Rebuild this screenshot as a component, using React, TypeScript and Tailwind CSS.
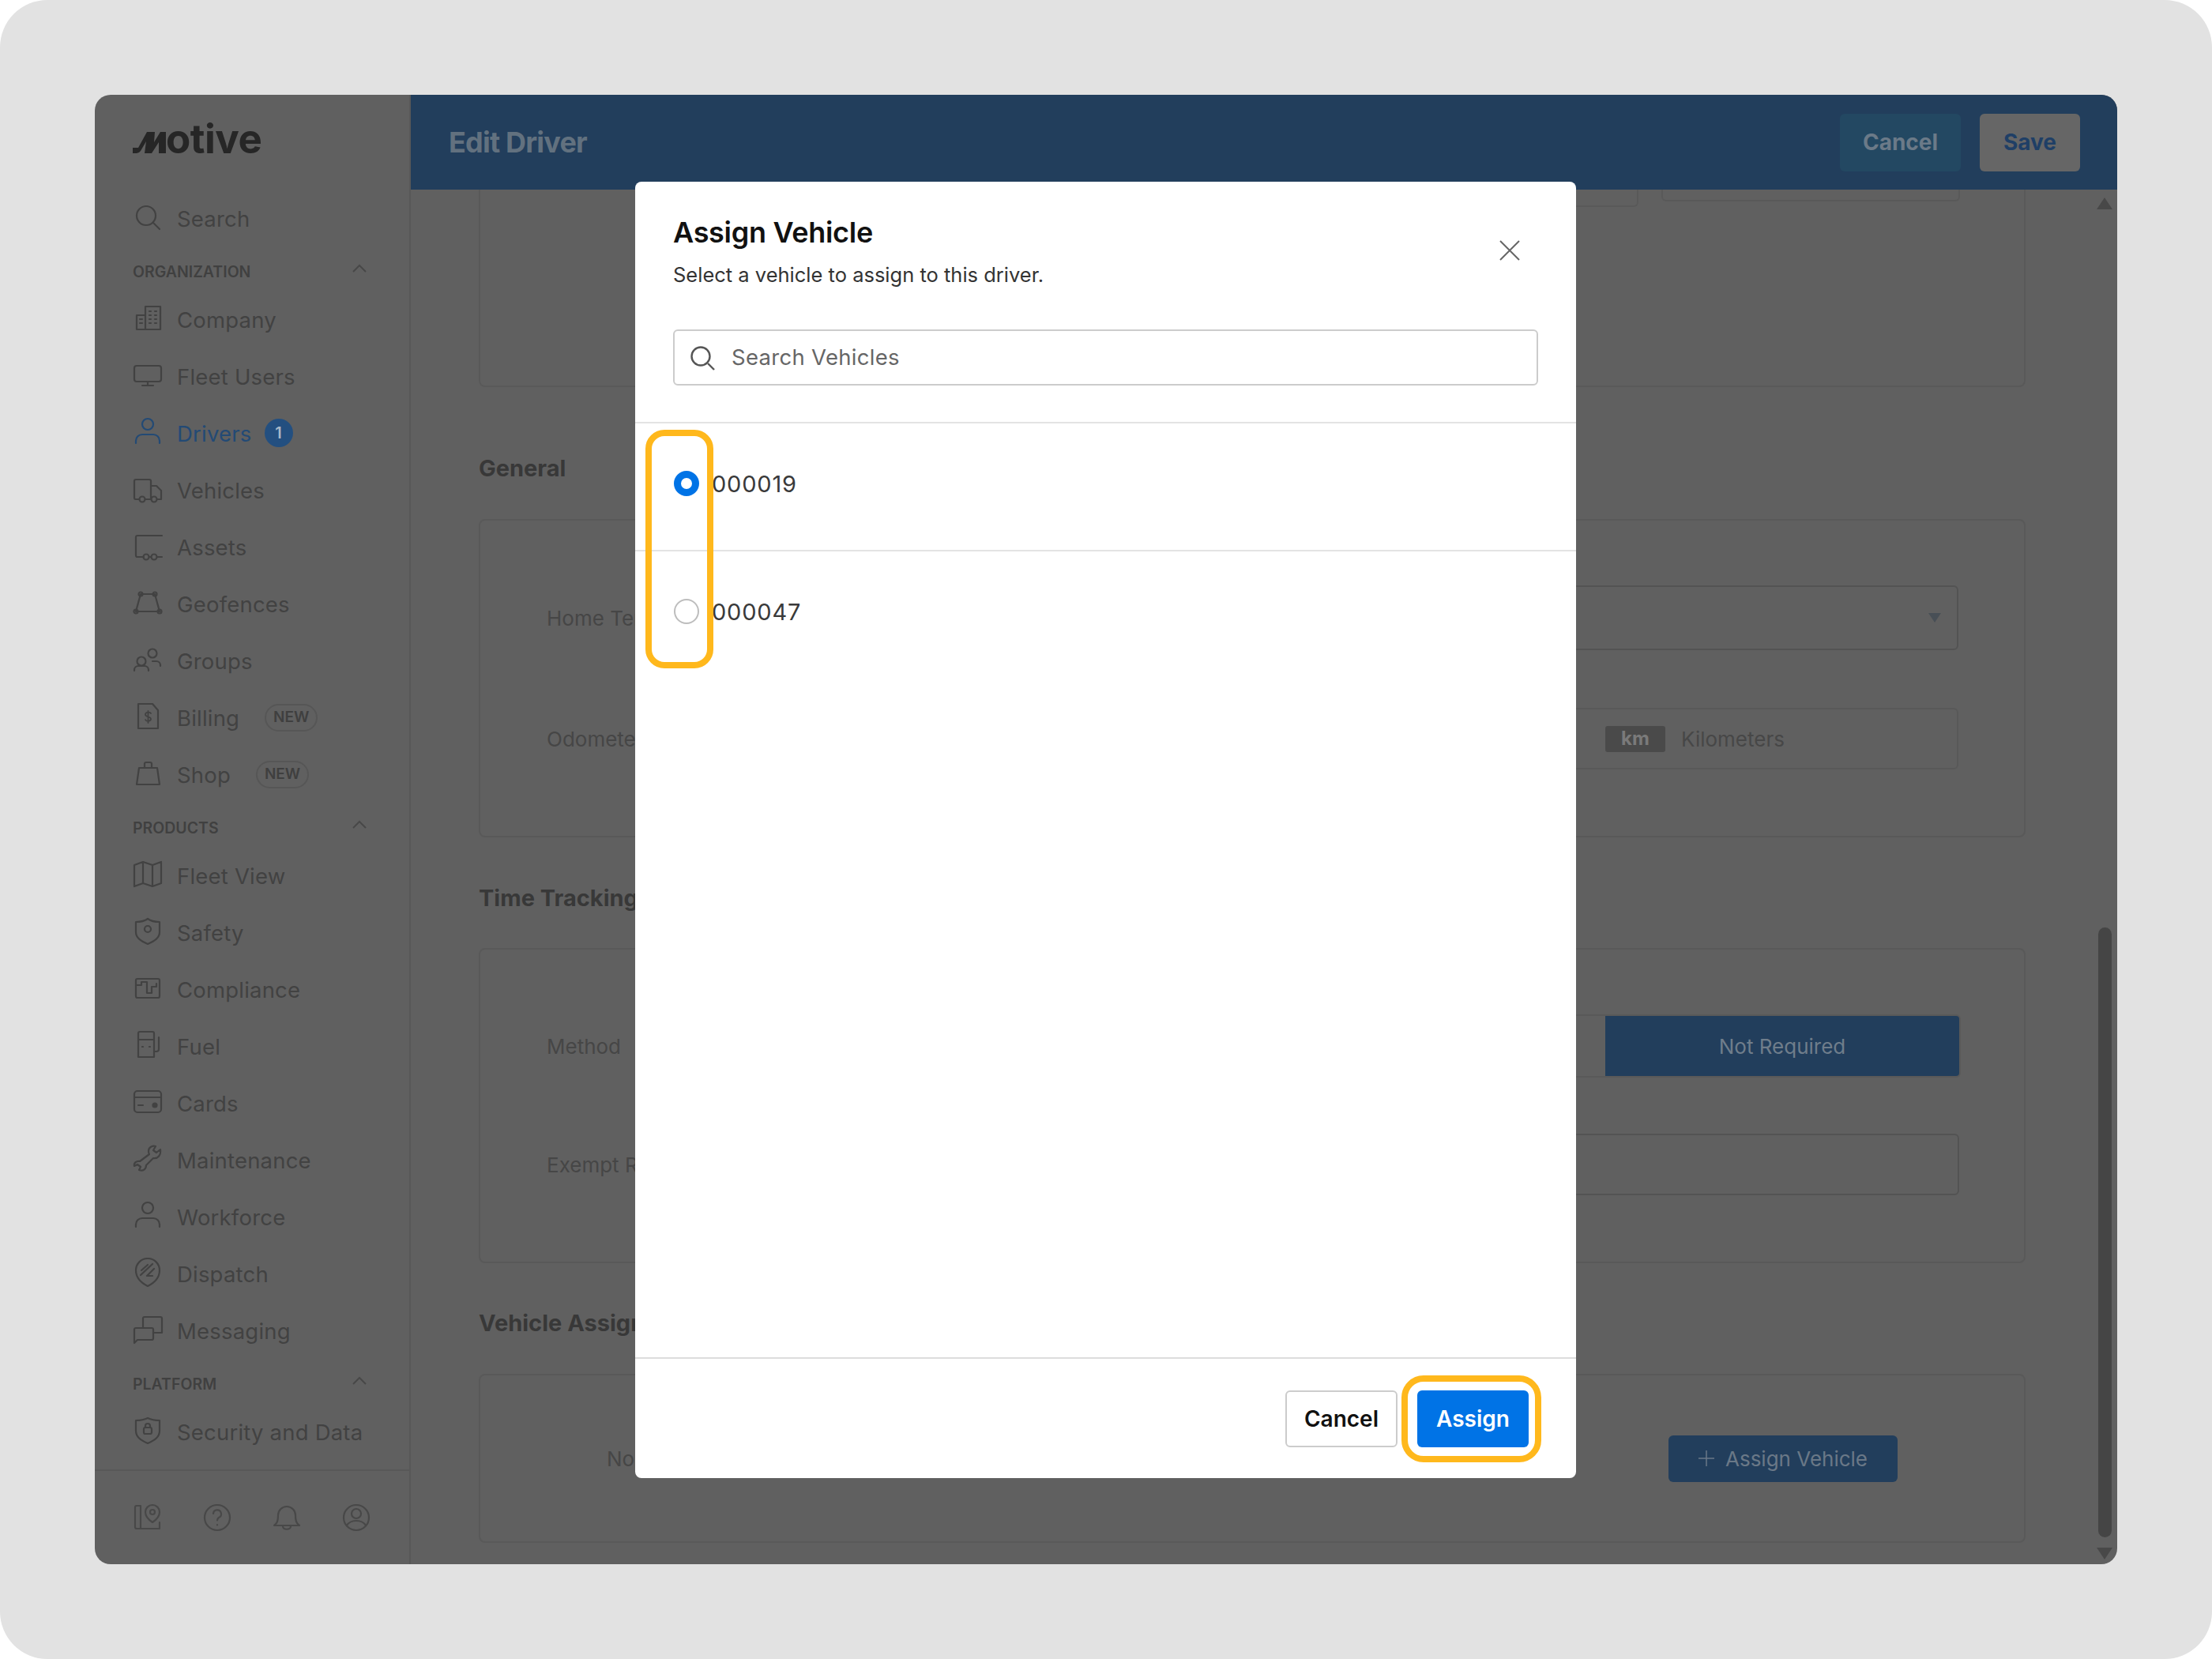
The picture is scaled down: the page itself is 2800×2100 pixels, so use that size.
import React from "react";

type P = { children: React.ReactNode; className?: string };

function Ic({ children, className = "" }: P) {
  return (
    <svg viewBox="0 0 40 40" fill="none" stroke="currentColor" strokeWidth="2.200" strokeLinecap="round" strokeLinejoin="round" className={`w-[40px] h-[40px] shrink-0 ${className}`}>
      {children}
    </svg>
  );
}

const icons: Record<string, React.ReactNode> = {
  search: (<><circle cx="18" cy="17" r="12" /><path d="M27 26l8 8" /></>),
  company: (<><path d="M6 33V15h11V4h19v29zM17 15v18" /><path d="M10 20h3M10 25h3M22 10h2M22 15h2M22 20h2M22 25h2M29 10h2M29 15h2M29 20h2M29 25h2" /></>),
  monitor: (<><rect x="3" y="7" width="34" height="20" rx="3" /><path d="M20 27v5M13 32h14" /></>),
  user: (<><circle cx="20" cy="9" r="7" /><path d="M5 33v-3a8 8 0 0 1 8-8h14a8 8 0 0 1 8 8v3" /></>),
  truck: (<><path d="M9 32H5a2 2 0 0 1-2-2V9a2 2 0 0 1 2-2h17a2 2 0 0 1 2 2v23h-7" /><path d="M24 15h7l6 6v11h-5" /><circle cx="13" cy="32" r="3.500" /><circle cx="28" cy="32" r="3.500" /></>),
  asset: (<><path d="M38 6H7a2 2 0 0 0-2 2v23a2 2 0 0 0 2 2h8M38 33h-6M22 33h2" /><circle cx="18" cy="33" r="3.500" /><circle cx="28" cy="33" r="3.500" /></>),
  geo: (<><path d="M11 8h18l6 22H5z" /><circle cx="11" cy="8" r="2.500" /><circle cx="29" cy="8" r="2.500" /><circle cx="5" cy="30" r="2.500" /><circle cx="35" cy="30" r="2.500" /></>),
  groups: (<g transform="translate(0 3)"><circle cx="26" cy="8" r="5.500" /><circle cx="12" cy="18" r="5.500" /><path d="M3 30v-1a5 5 0 0 1 5-5h8a5 5 0 0 1 5 5v1M26 18h5a5 5 0 0 1 5 5v1" /></g>),
  billing: (<><path d="M8 3h18l7 8v23H8z" /><path d="M24 15c-1-2-7-2-7 1.500s7 2 7 5.500-6 3.500-7 1M20.500 12v15" strokeWidth="1.800" /></>),
  shop: (<><path d="M9 12h23l3 21H6z" /><path d="M16 12V7a2 2 0 0 1 2-2h5a2 2 0 0 1 2 2v5" /></>),
  map: (<g transform="translate(0 -2)"><path d="M3 9l11-4 12 4 11-4v27l-11 4-12-4-11 4zM14 5v27M26 9v27" /></g>),
  safety: (<><path d="M5 7c6 0 11-1 15-4 4 3 9 4 15 4v13c0 7-6 11-15 15C11 31 5 27 5 20z" /><circle cx="20" cy="16" r="4" /></>),
  compliance: (<><rect x="5" y="7" width="30" height="24" rx="2" /><path d="M5 15h7v-4h7v14h6v-8h6v-4" /></>),
  fuel: (<><path d="M8 34V4a2 2 0 0 1 2-2h16a2 2 0 0 1 2 2v30zM8 12h20M28 27h3a3 3 0 0 0 3-3V9" /><path d="M13 21h1M22 21h1" /></>),
  cards: (<><rect x="3" y="5" width="34" height="27" rx="4" /><path d="M3 13h34M8 23h6" /><circle cx="29" cy="23" r="2.500" fill="currentColor" /></>),
  maint: (<><path d="M36 7l-5 4-4-3 3-5c-4-1-9 1-9 6 0 2 0 3 1 4L10 22c-4-1-8 2-7 6l4-2 4 3-2 4c5 2 9-1 9-6l9-9c6 1 10-4 9-11z" /></>),
  dispatch: (<><path d="M20 36C10 31 5 25 5 16a15 15 0 0 1 30 0c0 9-5 15-15 20z" /><path d="M26 8L11 22M28 14l-9 9h7M12 16l8-7" /></>),
  msg: (<><path d="M3 36V19a2 2 0 0 1 2-2h20a2 2 0 0 1 2 2v11a2 2 0 0 1-2 2H7z" /><path d="M14 17V5a2 2 0 0 1 2-2h20a2 2 0 0 1 2 2v18h-11" /></>),
  secure: (<><path d="M5 6c6 0 11-1 15-3 4 2 9 3 15 3v13c0 8-6 12-15 16C11 31 5 27 5 19z" /><rect x="15" y="15" width="10" height="8" rx="2" /><path d="M17 15v-2a3 3 0 0 1 6 0v2" /></>),
};

function NavRow({ icon, label, active, badge, fresh }: { icon: string; label: string; active?: boolean; badge?: boolean; fresh?: boolean }) {
  const tone = active ? "text-[#234a75]" : "text-[#424242]";
  return (
    <div className={`h-[72px] flex items-center pl-[47px] border-l-[4px] ml-[-4px] ${active ? "border-[#234f80]" : "border-transparent"} ${tone}`}>
      <Ic className="mr-[17px]">{icons[icon]}</Ic>
      <span className="text-[27.500px] tracking-[0.2px] leading-none pt-[3px]">{label}</span>
      {badge && (
        <span className="ml-[16px] w-[36px] h-[36px] rounded-full bg-[#234f80] text-[#a8b8c8] text-[20px] font-semibold flex items-center justify-center">1</span>
      )}
      {fresh && (
        <span className="ml-[32px] h-[35px] w-[67px] rounded-full border-2 border-[#565656] text-[#3f3f3f] text-[19px] font-semibold flex items-center justify-center">NEW</span>
      )}
    </div>
  );
}

function Section({ label }: { label: string }) {
  return (
    <div className="h-[56px] pt-[10px] pl-[48px] pr-[53px] flex items-center justify-between">
      <span className="text-[19.500px] font-semibold text-[#404040] leading-none">{label}</span>
      <svg viewBox="0 0 20 12" className="w-[20px] h-[12px] mt-[-10px] text-[#484848]" fill="none" stroke="currentColor" strokeWidth="2"><path d="M2 10l8-8 8 8" /></svg>
    </div>
  );
}

function Sidebar() {
  return (
    <aside className="w-[400px] shrink-0 border-r-2 border-[#585858] bg-[#606060] flex flex-col overflow-hidden">
      <div className="h-[120px] pl-[48px] pt-[36px]">
        <div className="flex items-baseline text-[#262626]">
          <svg viewBox="0 0 42 27" className="w-[42px] h-[27px] shrink-0" fill="currentColor">
            <path d="M0 27V20H7L18 0H28L27 13 35 0H42V27H33V13L24 27H15L17 12 10 24Q8 27 5 27Z" />
          </svg>
          <span className="text-[51px] font-bold tracking-[-0.5px] leading-[40px]">otive</span>
        </div>
      </div>
      <NavRow icon="search" label="Search" />
      <Section label="ORGANIZATION" />
      <NavRow icon="company" label="Company" />
      <NavRow icon="monitor" label="Fleet Users" />
      <NavRow icon="user" label="Drivers" active badge />
      <NavRow icon="truck" label="Vehicles" />
      <NavRow icon="asset" label="Assets" />
      <NavRow icon="geo" label="Geofences" />
      <NavRow icon="groups" label="Groups" />
      <NavRow icon="billing" label="Billing" fresh />
      <NavRow icon="shop" label="Shop" fresh />
      <Section label="PRODUCTS" />
      <NavRow icon="map" label="Fleet View" />
      <NavRow icon="safety" label="Safety" />
      <NavRow icon="compliance" label="Compliance" />
      <NavRow icon="fuel" label="Fuel" />
      <NavRow icon="cards" label="Cards" />
      <NavRow icon="maint" label="Maintenance" />
      <NavRow icon="user" label="Workforce" />
      <NavRow icon="dispatch" label="Dispatch" />
      <NavRow icon="msg" label="Messaging" />
      <Section label="PLATFORM" />
      <NavRow icon="secure" label="Security and Data" />
      <div className="mt-[12px] border-t-2 border-[#585858] flex-1 flex items-center pl-[47px] gap-[48px] text-[#484848]">
        <Ic><path d="M6 5h5v29H6a2 2 0 0 1-2-2V7a2 2 0 0 1 2-2zM11 5v29h24V26" /><path d="M26 26c-6-4-9-8-9-13a9 9 0 0 1 18 0c0 5-3 9-9 13z" /><circle cx="26" cy="13" r="3" /></Ic>
        <Ic><circle cx="20" cy="20" r="16" /><path d="M15 15a5 5 0 1 1 7 5c-1.500 1-2 2-2 3.500M20 29v.5" /></Ic>
        <Ic><path d="M4 30c4-3 5-6 5-13a11 11 0 0 1 22 0c0 7 1 10 5 13zM15 31c0 5 10 5 10 0" /></Ic>
        <Ic><circle cx="20" cy="20" r="16" /><circle cx="20" cy="15" r="6" /><path d="M8 30c3-5 7-6 12-6s9 1 12 6" /></Ic>
      </div>
    </aside>
  );
}

function Card({ className = "", children }: P) {
  return <div className={`border-2 border-[#595959] rounded-[8px] ${className}`}>{children}</div>;
}

function Field({ className = "", children }: P) {
  return <div className={`border-2 border-[#535353] rounded-[6px] flex items-center ${className}`}>{children}</div>;
}

function Heading({ className = "", children }: P) {
  return <h2 className={`text-[29px] font-bold text-[#383838] leading-[36px] h-[36px] ${className}`}>{children}</h2>;
}

function Main() {
  return (
    <div className="flex-1 min-w-0 flex flex-col bg-[#606060]">
      <header className="h-[120px] shrink-0 bg-[#223e5c] flex items-center pl-[48px] pr-[47px] justify-between">
        <span className="text-[36px] font-bold text-[#62717f] tracking-[-0.8px]">Edit Driver</span>
        <div className="flex gap-[24px] items-center">
          <div className="w-[153px] h-[73px] rounded-[6px] bg-[#234862] text-[#6b7a88] text-[28px] font-bold flex items-center justify-center">Cancel</div>
          <div className="w-[127px] h-[73px] rounded-[6px] bg-[#666666] text-[#1f3f66] text-[28px] font-bold flex items-center justify-center">Save</div>
        </div>
      </header>
      <div className="flex-1 min-h-0 flex overflow-hidden">
        <div className="flex-1 min-w-0 pl-[86px] pr-[88px]">
          <Card className="h-[250px] border-t-0 rounded-t-none flex justify-end gap-[29px] pr-[81px] items-start">
            <div className="w-[300px] h-[22px] border-2 border-t-0 border-[#595959] rounded-b-[6px]" />
            <div className="w-[378px] h-[15px] border-2 border-t-0 border-[#595959] rounded-b-[6px]" />
          </Card>
          <Heading className="mt-[85px]">General</Heading>
          <Card className="mt-[46px] h-[403px] pt-[82px] pl-[84px] pr-[83px]">
            <div className="flex items-center h-[82px] gap-[20px]">
              <span className="w-[300px] text-[26px] text-[#464646]">Home Terminal</span>
              <Field className="flex-1 h-[82px] justify-end pr-[20px]">
                <svg viewBox="0 0 16 12" className="w-[16px] h-[12px] text-[#484f56]" fill="currentColor"><path d="M0 0h16L8 12z" /></svg>
              </Field>
            </div>
            <div className="flex items-center h-[78px] mt-[73px] gap-[20px]">
              <span className="w-[300px] text-[26px] text-[#464646]">Odometer Unit</span>
              <Field className="flex-1 h-[78px] border-[#595959] pl-[1018px]">
                <span className="w-[76px] h-[33px] rounded-[3px] bg-[#4a4a4a] text-[#7a7a7a] text-[24px] font-bold flex items-center justify-center">km</span>
                <span className="ml-[20px] text-[26px] text-[#474747]">Kilometers</span>
              </Field>
            </div>
          </Card>
          <Heading className="mt-[59px]">Time Tracking</Heading>
          <Card className="mt-[45px] h-[399px] pt-[82px] pl-[84px] pr-[80px]">
            <div className="flex items-center h-[80px] gap-[20px]">
              <span className="w-[300px] text-[26px] text-[#464646]">Method</span>
              <Field className="flex-1 h-[80px] border-[#595959] overflow-hidden justify-end">
                <div className="w-[448px] h-[80px] bg-[#223e5c] text-[#6f7d8b] text-[26px] flex items-center justify-center">Not Required</div>
              </Field>
            </div>
            <div className="flex items-center h-[78px] mt-[71px] gap-[20px] mr-[2px]">
              <span className="w-[300px] text-[26px] text-[#464646]">Exempt Reason</span>
              <Field className="flex-1 h-[78px]">{""}</Field>
            </div>
          </Card>
          <Heading className="mt-[58px]">Vehicle Assignment</Heading>
          <Card className="mt-[46px] h-[214px] flex items-center pl-[160px] pr-[160px] justify-between">
            <span className="text-[26px] text-[#464646]">No vehicle assigned</span>
            <div className="w-[290px] h-[59px] rounded-[6px] bg-[#223e5c] text-[#6a7887] text-[26px] flex items-center justify-center gap-[14px]">
              <svg viewBox="0 0 20 20" className="w-[20px] h-[20px]" fill="none" stroke="currentColor" strokeWidth="1.500"><path d="M10 0v20M0 10h20" /></svg>
              Assign Vehicle
            </div>
          </Card>
        </div>
        <div className="w-[24px] mr-[4px] shrink-0 flex flex-col items-center pt-[10px] pb-[6px]">
          <svg viewBox="0 0 20 15" className="w-[20px] h-[15px] text-[#484848]" fill="currentColor"><path d="M10 0l10 15H0z" /></svg>
          <div className="flex-1" />
          <div className="w-[17px] h-[772px] rounded-full bg-[#454545]" />
          <svg viewBox="0 0 20 15" className="w-[20px] h-[15px] mt-[13px] text-[#484848]" fill="currentColor"><path d="M0 0h20L10 15z" /></svg>
        </div>
      </div>
    </div>
  );
}

function Radio({ on }: { on?: boolean }) {
  return on ? (
    <span className="w-[32px] h-[32px] rounded-full border-[9px] border-[#0073e6] bg-white shrink-0" />
  ) : (
    <span className="w-[32px] h-[32px] rounded-full border-2 border-[#bdbdbd] bg-white shrink-0" />
  );
}

function VehicleRow({ id, on, className = "" }: { id: string; on?: boolean; className?: string }) {
  return (
    <div className={`flex items-center pl-[49px] gap-[16px] ${className}`}>
      <Radio on={on} />
      <span className="text-[29px] text-[#3a3a3a] tracking-[0.8px] leading-none">{id}</span>
    </div>
  );
}

function Modal() {
  return (
    <div className="absolute left-[684px] top-[110px] w-[1191px] h-[1641px] bg-white rounded-[8px] flex flex-col">
      <div className="relative px-[48px] pt-[44px] pb-[46px] border-b-2 border-[#e3e3e3]">
        <h1 className="text-[36px] font-semibold text-[#111111] leading-[40px] tracking-[-0.3px]">Assign Vehicle</h1>
        <p className="mt-[17px] text-[25.500px] text-[#333333] leading-[34px]">Select a vehicle to assign to this driver.</p>
        <svg viewBox="0 0 26 26" className="absolute right-[71px] top-[74px] w-[26px] h-[26px] text-[#666666]" fill="none" stroke="currentColor" strokeWidth="2"><path d="M1 1l24 24M25 1L1 25" /></svg>
        <div className="mt-[52px] h-[71px] border-2 border-[#cccccc] rounded-[6px] flex items-center pl-[18px] gap-[20px]">
          <svg viewBox="0 0 34 34" className="w-[34px] h-[34px] text-[#555555]" fill="none" stroke="currentColor" strokeWidth="2.400"><circle cx="15" cy="15" r="11.500" /><path d="M24 24l8 8" /></svg>
          <span className="text-[27.500px] text-[#666666] tracking-[0.3px]">Search Vehicles</span>
        </div>
      </div>
      <VehicleRow id="000019" on className="h-[162px] pb-[8px] border-b-2 border-[#e3e3e3]" />
      <VehicleRow id="000047" className="h-[160px] pb-[8px]" />
      <div className="flex-1" />
      <div className="h-[153px] border-t-2 border-[#dddddd] flex items-center justify-end pr-[60px] gap-[25px]">
        <div className="w-[142px] h-[72px] rounded-[6px] border-2 border-[#cccccc] text-[28px] font-semibold text-[#111111] flex items-center justify-center">Cancel</div>
        <div className="relative w-[141px] h-[72px] rounded-[6px] bg-[#0073e6] text-[28px] font-semibold text-white flex items-center justify-center">
          Assign
          <span className="absolute left-[-20px] right-[-16px] top-[-19px] bottom-[-19px] border-[8px] border-[#ffb81c] rounded-[28px]" />
        </div>
      </div>
      <span className="absolute left-[13px] top-[314px] w-[86px] h-[302px] border-[8px] border-[#ffb81c] rounded-[24px]" />
    </div>
  );
}

export default function App() {
  return (
    <div className="w-[2800px] h-[2100px] bg-white [font-family:Inter,sans-serif]">
      <div className="w-full h-full bg-[#e2e2e2] rounded-[60px] p-[120px]">
        <div className="relative w-full h-[1860px] rounded-[20px] overflow-hidden flex">
          <Sidebar />
          <Main />
          <Modal />
        </div>
      </div>
    </div>
  );
}
